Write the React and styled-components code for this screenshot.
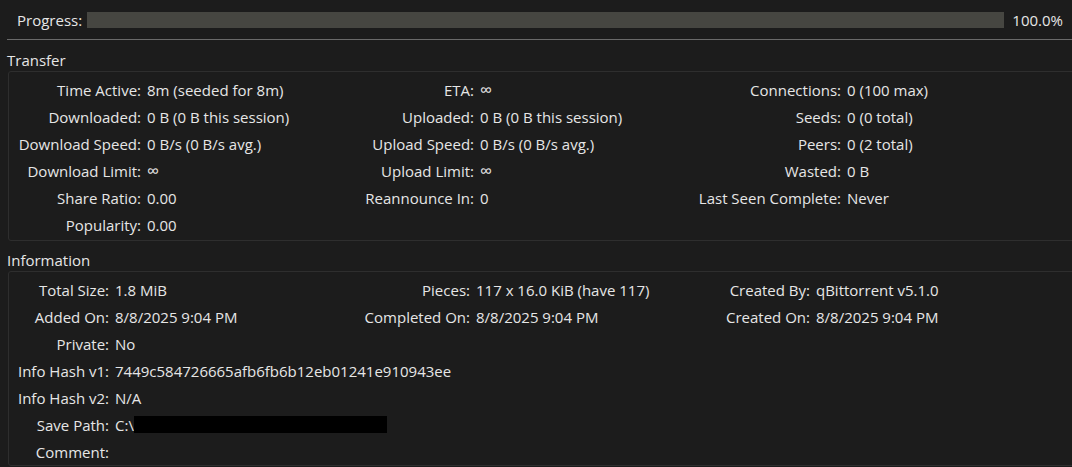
import React from 'react';
import styled, { createGlobalStyle } from 'styled-components';

const GlobalStyle = createGlobalStyle`
  html, body {
    margin: 0;
    padding: 0;
    background: #1c1c1c;
  }
  body {
    font-family: "Open Sans", "Noto Sans", "Liberation Sans", sans-serif;
    font-size: 15px;
    color: #e6e6e6;
    overflow: hidden;
  }
`

const Page = styled.div`
  width: 1072px;
  height: 467px;
  overflow: hidden;
  background: #1c1c1c;
`

const ProgressRow = styled.div`
  display: flex;
  align-items: center;
  height: 40px;
  margin-left: 7px;
  padding: 0 9px 0 10px;
  border-bottom: 1px solid #6a6a6a;
  box-sizing: border-box;
`

const ProgressLabel = styled.span`
  white-space: nowrap;
`

const ProgressBar = styled.div`
  flex: 1;
  height: 16px;
  background: #464641;
  margin: 0 8px 0 5px;
`

const ProgressValue = styled.span`
  white-space: nowrap;
`

const SectionTitle = styled.div`
  height: 22px;
  line-height: 22px;
  padding-left: 7px;
  margin-top: ${p => p.$top || 10}px;
`

const GroupBox = styled.div`
  margin-left: 8px;
  margin-right: -4px;
  border: 1px solid #2e2e2e;
  border-radius: 3px;
  padding: ${p => p.$pad};
`

const Grid = styled.div`
  display: grid;
  grid-template-columns: ${p => p.$cols};
  grid-auto-rows: 27px;
  align-items: center;
`

const Label = styled.div`
  text-align: right;
  white-space: nowrap;
`

const Value = styled.div`
  padding-left: 6px;
  white-space: nowrap;
  grid-column: ${p => (p.$wide ? 'span 5' : 'auto')};
  display: flex;
  align-items: center;
`

const Infinity = styled.span`
  font-size: 17px;
  line-height: 1;
`

const Redacted = styled.span`
  display: inline-block;
  width: 253px;
  height: 17px;
  background: #000;
`

const transferCols = '132px 159px 174px 176px 191px 1fr';
const infoCols = '100px 221px 140px 170px 170px 1fr';

const inf = <Infinity>∞</Infinity>;

const transfer = [
  [['Time Active:', '8m (seeded for 8m)'], ['ETA:', inf], ['Connections:', '0 (100 max)']],
  [['Downloaded:', '0 B (0 B this session)'], ['Uploaded:', '0 B (0 B this session)'], ['Seeds:', '0 (0 total)']],
  [['Download Speed:', '0 B/s (0 B/s avg.)'], ['Upload Speed:', '0 B/s (0 B/s avg.)'], ['Peers:', '0 (2 total)']],
  [['Download Limit:', inf], ['Upload Limit:', inf], ['Wasted:', '0 B']],
  [['Share Ratio:', '0.00'], ['Reannounce In:', '0'], ['Last Seen Complete:', 'Never']],
  [['Popularity:', '0.00']],
];

const information = [
  [['Total Size:', '1.8 MiB'], ['Pieces:', '117 x 16.0 KiB (have 117)'], ['Created By:', 'qBittorrent v5.1.0']],
  [['Added On:', '8/8/2025 9:04 PM'], ['Completed On:', '8/8/2025 9:04 PM'], ['Created On:', '8/8/2025 9:04 PM']],
  [['Private:', 'No']],
  [['Info Hash v1:', '7449c584726665afb6fb6b12eb01241e910943ee']],
  [['Info Hash v2:', 'N/A']],
  [['Save Path:', <>C:\<Redacted /></>]],
  [['Comment:', '']],
];

function Fields({ rows }) {
  return rows.map((row, r) =>
    row.map(([label, value], i) => (
      <React.Fragment key={`${r}-${i}`}>
        <Label>{label}</Label>
        <Value $wide={row.length === 1}>{value}</Value>
      </React.Fragment>
    ))
  );
}

export default function App() {
  return (
    <Page>
      <GlobalStyle />
      <ProgressRow>
        <ProgressLabel>Progress:</ProgressLabel>
        <ProgressBar />
        <ProgressValue>100.0%</ProgressValue>
      </ProgressRow>

      <SectionTitle $top={9}>Transfer</SectionTitle>
      <GroupBox $pad="4px 0 2px 0">
        <Grid $cols={transferCols}>
          <Fields rows={transfer} />
        </Grid>
      </GroupBox>

      <SectionTitle $top={8}>Information</SectionTitle>
      <GroupBox $pad="4px 0 0 0">
        <Grid $cols={infoCols}>
          <Fields rows={information} />
        </Grid>
      </GroupBox>
    </Page>
  );
}
